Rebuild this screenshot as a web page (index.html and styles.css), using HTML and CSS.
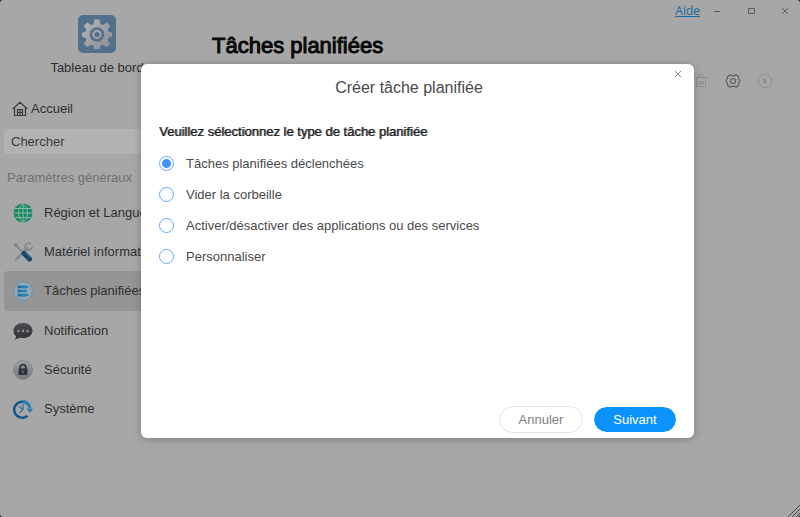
FILE: index.html
```html
<!DOCTYPE html>
<html lang="fr">
<head>
  <meta charset="UTF-8">
  <meta name="viewport" content="width=device-width, initial-scale=1">
  <title>Tâches planifiées</title>
  <link rel="stylesheet" href="styles.css">
</head>
<body>

<div class="window">
  <aside class="sidebar">
    <div class="brand">
      <svg class="brand-icon" viewBox="0 0 38 38" aria-hidden="true">
        <defs>
          <linearGradient id="gearFill" x1="0" y1="0" x2="1" y2="1">
            <stop offset="0" stop-color="#b5b6b7"/>
            <stop offset="1" stop-color="#898e93"/>
          </linearGradient>
        </defs>
        <rect width="38" height="38" rx="5" fill="#526f8c"/>
        <path d="M16.500 4.500h5l.9 4.500 2.500 1 3.800-2.600 3.500 3.500-2.600 3.800 1 2.300 3.400.5v4.500l-3.400.7-1 2.300 2.600 3.800-3.500 3.500-3.800-2.600-2.500 1-.9 3.500h-5l-.9-3.500-2.500-1-3.800 2.600-3.500-3.500 2.600-3.800-1-2.300-3.400-.7v-4.500l3.400-.5 1-2.300-2.600-3.800 3.500-3.500 3.800 2.600 2.500-1z" fill="url(#gearFill)"/>
        <circle cx="19" cy="19.500" r="6" fill="none" stroke="#526f8c" stroke-width="2.500"/>
        <circle cx="19" cy="19.500" r="2.500" fill="#526f8c"/>
      </svg>
      <span>Tableau de bord</span>
    </div>

    <a class="home" href="#">
      <svg width="16" height="16" viewBox="0 0 16 16" fill="none" stroke="#3b3b3b" stroke-width="1.200" aria-hidden="true">
        <path d="M.7 8 8 1.300 15.300 8M2.500 6.800V14.500h11V6.800M5.500 14.500V8.500h5v6M8 8.500v6M5.500 11.500h5"/>
      </svg>
      Accueil
    </a>

    <input class="search" type="search" placeholder="Chercher" aria-label="Chercher">

    <h2 class="section">Paramètres généraux</h2>
    <nav class="menu">
      <a class="menu-item" href="#">
        <svg viewBox="0 0 20 20" aria-hidden="true">
          <defs>
            <linearGradient id="globeFill">
              <stop offset="0" stop-color="#178d54"/>
              <stop offset="1" stop-color="#1d8377"/>
            </linearGradient>
          </defs>
          <circle cx="10" cy="10" r="9.500" fill="url(#globeFill)"/>
          <path d="M10 .5v19M.5 10h19M2 5.500h16M2 14.500h16M10 .5c-6 5-6 14 0 19M10 .5c6 5 6 14 0 19" fill="none" stroke="#8ab9a0"/>
        </svg>
        Région et Langue
      </a>
      <a class="menu-item" href="#">
        <svg viewBox="0 0 20 20" fill="none" stroke-linecap="round" aria-hidden="true">
          <path d="M3 17.500 14.500 6" stroke="#858a8e" stroke-width="2.500"/>
          <path d="M17.500 1.500a3.500 3.500 0 1 0 1.500 4" stroke="#858a8e" stroke-width="2"/>
          <path d="M2 2.500 10 10.500" stroke="#858a8e" stroke-width="2"/>
          <path d="m1 1 4 1-3 3z" fill="#777d82"/>
          <path d="m11 11.500 5.500 5.500" stroke="#184568" stroke-width="5"/>
          <path d="m13 11 4 4" stroke="#2c6991" stroke-width="1.500"/>
        </svg>
        Matériel informatique
      </a>
      <a class="menu-item active" href="#" aria-current="page">
        <svg viewBox="0 0 20 20" aria-hidden="true">
          <circle cx="10" cy="10" r="9.300" fill="#9da7ae" stroke="#5c92b7"/>
          <path d="M4.500 4.500h9v3h-9zM4.500 8.500h9v3h-9zM4.500 12.500h9v3h-9z" fill="#1c72a7"/>
          <path d="M9 6h6.500M9 10h5M9 14h6.500" stroke="#2488b9" stroke-width="2"/>
          <path d="M5.500 8h8M5.500 12h8" stroke="#80b4cf"/>
        </svg>
        Tâches planifiées
      </a>
      <a class="menu-item" href="#">
        <svg viewBox="0 0 20 20" aria-hidden="true">
          <defs>
            <linearGradient id="bubbleFill" x1="0" y1="0" x2="0" y2="1">
              <stop offset="0" stop-color="#4b4b50"/>
              <stop offset="1" stop-color="#30303a"/>
            </linearGradient>
          </defs>
          <path d="M10 2c5.500 0 9.500 3.300 9.500 7.700S15.500 17 10 17c-1.300 0-2.500-.1-3.500-.4-1.500 1.200-3 1.700-5 1.900 1-1 1.500-2 1.600-3.200C1.400 13.900.5 12 .5 9.700.5 5.300 4.500 2 10 2z" fill="url(#bubbleFill)"/>
          <g fill="#96939a"><circle cx="5.500" cy="10" r="1.200"/><circle cx="10" cy="10" r="1.200"/><circle cx="14.500" cy="10" r="1.200"/></g>
        </svg>
        Notification
      </a>
      <a class="menu-item" href="#">
        <svg viewBox="0 0 20 20" aria-hidden="true">
          <defs>
            <linearGradient id="lockFill" x1="0" y1="0" x2="0" y2="1">
              <stop offset="0" stop-color="#a0a1a2"/>
              <stop offset="1" stop-color="#73787d"/>
            </linearGradient>
          </defs>
          <circle cx="10" cy="10" r="9.500" fill="url(#lockFill)" stroke="#898c8f"/>
          <path d="M7.200 9V7.500a2.800 2.800 0 0 1 5.600 0V9" fill="none" stroke="#30343c" stroke-width="1.800"/>
          <rect x="5.500" y="8.500" width="9" height="6.500" rx="1" fill="#30343c"/>
          <path d="M10 10.500v2.500" stroke="#737880" stroke-width="1.300"/>
        </svg>
        Sécurité
      </a>
      <a class="menu-item" href="#">
        <svg viewBox="0 0 20 20" fill="none" aria-hidden="true">
          <path d="M14.500 16.700A8 8 0 1 1 17 9" stroke="#17568a" stroke-width="2.500"/>
          <path d="M9 2a8 8 0 0 1 8 7" stroke="#2585b7" stroke-width="2.500"/>
          <path d="M13.500 9.500h6.500l-3 4.500z" fill="#2579ab"/>
          <path d="M10 5v5.500L6.500 14M6 7.500l4 3" stroke="#35749e" stroke-width="1.300"/>
        </svg>
        Système
      </a>
    </nav>
  </aside>

  <main class="content">
    <div class="titlebar">
      <a class="help" href="#">Aide</a>
      <button class="win-btn" aria-label="Réduire">
        <svg width="8" height="8" viewBox="0 0 8 8" fill="none" stroke="#5b5b5b"><path d="M1 4.500h6"/></svg>
      </button>
      <button class="win-btn" aria-label="Agrandir">
        <svg width="8" height="8" viewBox="0 0 8 8" fill="none" stroke="#5b5b5b"><path d="M1.500 1.500h6v5h-6z"/></svg>
      </button>
      <button class="win-btn" aria-label="Fermer la fenêtre">
        <svg width="8" height="8" viewBox="0 0 8 8" fill="none" stroke="#5b5b5b"><path d="m1 1 6 6M7 1 1 7"/></svg>
      </button>
    </div>
    <h1 class="page-title">Tâches planifiées</h1>
    <div class="toolbar">
      <button class="tool-btn" aria-label="Supprimer" disabled>
        <svg width="16" height="16" viewBox="0 0 16 16" fill="none" stroke="#8f8f8f" aria-hidden="true">
          <path d="M1 4.500h14M3.500 4.500V13.500h9V4.500M5.500 4.500l1-3h3l1 3M6 8v3.500M8 8v3.500M10 8v3.500"/>
        </svg>
      </button>
      <button class="tool-btn" aria-label="Paramètres">
        <svg width="16" height="16" viewBox="0 0 16 16" fill="none" stroke="#5f5f5f" stroke-width="1.200" stroke-linejoin="round" aria-hidden="true">
          <path d="M5 1.800 6.500 2.600h3L11 1.800l2.300 1.400.2 2L15 8l-1.500 2.800-.2 2L11 14.200l-1.500-.8h-3L5 14.200l-2.300-1.400-.2-2L1 8l1.500-2.800.2-2z"/>
          <circle cx="8" cy="8" r="2.500"/>
        </svg>
      </button>
      <button class="tool-btn" aria-label="Exécuter" disabled>
        <svg width="16" height="16" viewBox="0 0 16 16" fill="none" stroke="#8f8f8f" aria-hidden="true">
          <circle cx="8" cy="8" r="6.800"/>
          <path d="m6.800 5.500 3 2.500-3 2.500z" fill="#8f8f8f"/>
        </svg>
      </button>
    </div>
  </main>

  <svg class="resize-grip" width="13" height="13" viewBox="0 0 13 13" stroke="#4c4c4c" aria-hidden="true">
    <path d="M1 13 13 1M5 13l8-8M9 13l4-4"/>
  </svg>
</div>

<div class="overlay">
  <form class="dialog" role="dialog" aria-labelledby="dialog-title">
    <button class="dialog-close" type="button" aria-label="Fermer">
      <svg width="8" height="8" viewBox="0 0 8 8" fill="none" stroke="#8f8f8f"><path d="m1 1 6 6M7 1 1 7"/></svg>
    </button>
    <h2 class="dialog-title" id="dialog-title">Créer tâche planifiée</h2>
    <fieldset class="choices">
      <legend>Veuillez sélectionnez le type de tâche planifiée</legend>
      <label class="choice"><input type="radio" name="type" checked>Tâches planifiées déclenchées</label>
      <label class="choice"><input type="radio" name="type">Vider la corbeille</label>
      <label class="choice"><input type="radio" name="type">Activer/désactiver des applications ou des services</label>
      <label class="choice"><input type="radio" name="type">Personnaliser</label>
    </fieldset>
    <div class="actions">
      <button class="btn" type="button">Annuler</button>
      <button class="btn primary" type="submit">Suivant</button>
    </div>
  </form>
</div>

</body>
</html>
```

FILE: styles.css
```css
* {
  box-sizing: border-box;
}
body {
  margin: 0;
  background: #111;
  color: #2f2f2f;
  font-family: "Liberation Sans", Arial, sans-serif;
  font-size: 13px;
  line-height: 16px;
}
h1, h2 {
  margin: 0;
  font-weight: normal;
}
button, input {
  font: inherit;
}
button {
  padding: 0;
  border: none;
  background: none;
}
a {
  color: inherit;
  text-decoration: none;
}

.window {
  position: relative;
  display: flex;
  min-height: 100vh;
  background: #a7a7a7;
  border-radius: 3px;
}

/* sidebar */
.sidebar {
  width: 194px;
  padding: 15px 4px 0;
}
.brand {
  display: flex;
  flex-direction: column;
  align-items: center;
  gap: 7px;
}
.brand-icon {
  width: 38px;
  height: 38px;
}
.home {
  display: flex;
  align-items: center;
  gap: 3px;
  margin-top: 25px;
  padding-left: 8px;
}
.search {
  display: block;
  width: 100%;
  height: 25px;
  margin-top: 12px;
  padding: 0 7px;
  border: none;
  border-radius: 4px;
  background: #b2b2b2;
}
.search::placeholder {
  color: #3a3a3a;
}
.section {
  margin: 16px 0 7px;
  padding-left: 3px;
  color: #707070;
  font-size: 13px;
}
.menu-item {
  display: flex;
  align-items: center;
  gap: 11px;
  height: 39px;
  padding-left: 9px;
  border-radius: 4px;
  white-space: nowrap;
}
.menu-item svg {
  width: 20px;
  height: 20px;
}
.menu-item.active {
  height: 40px;
  background: #959595;
}

/* content */
.content {
  flex: 1;
  padding: 0 6px 0 18px;
}
.titlebar {
  display: flex;
  justify-content: flex-end;
  align-items: center;
  height: 22px;
}
.help {
  margin-right: 8px;
  color: #17679c;
  text-decoration: underline;
  font-family: "Open Sans", sans-serif;
  font-size: 12px;
}
.win-btn {
  display: grid;
  place-items: center;
  width: 18px;
  height: 18px;
}
.win-btn + .win-btn {
  margin-left: 16px;
}
.page-title {
  margin-top: 11px;
  color: #080808;
  font-size: 22px;
  line-height: 26px;
  -webkit-text-stroke: 1px;
}
.toolbar {
  display: flex;
  justify-content: flex-end;
  gap: 16px;
  margin-top: 14px;
  padding-right: 21px;
}
.tool-btn, .tool-btn svg {
  display: block;
}
.resize-grip {
  position: absolute;
  right: 0;
  bottom: 0;
}

/* dialog */
.overlay {
  position: absolute;
  inset: 0;
  display: grid;
  padding: 64px 106px 79px 141px;
}
.dialog {
  position: relative;
  display: flex;
  flex-direction: column;
  padding: 14px 17px 5px 18px;
  border-radius: 6px;
  background: #fff;
  box-shadow: 0 1px 8px rgba(0, 0, 0, 0.25);
}
.dialog-close {
  position: absolute;
  top: 2px;
  right: 8px;
  display: grid;
  place-items: center;
  width: 16px;
  height: 16px;
}
.dialog-title {
  padding-right: 18px;
  color: #4a4a4a;
  font-size: 16px;
  line-height: 20px;
  text-align: center;
}
.choices {
  flex: 1;
  margin: 26px 0 0;
  padding: 0;
  border: none;
}
.choices legend {
  padding: 0;
  margin-bottom: 8px;
  color: #1c1c1c;
  text-shadow: 1px 0 #777;
}
.choice {
  display: flex;
  align-items: center;
  gap: 12px;
  height: 31px;
  color: #4a4a4a;
}
.choice input {
  appearance: none;
  width: 15px;
  height: 15px;
  margin: 0;
  border: 1px solid #65a6fb;
  border-radius: 50%;
}
.choice input:checked {
  background: radial-gradient(circle, #4292fb 4px, #fff 5px);
}
.actions {
  display: flex;
  justify-content: flex-end;
  gap: 10px;
}
.btn {
  width: 84px;
  height: 27px;
  border: 1px solid #e4e4e4;
  border-radius: 14px;
  color: #808080;
}
.btn.primary {
  border-color: #fff;
  background: #0a93fa;
  background-clip: padding-box;
  color: #fff;
}
```
